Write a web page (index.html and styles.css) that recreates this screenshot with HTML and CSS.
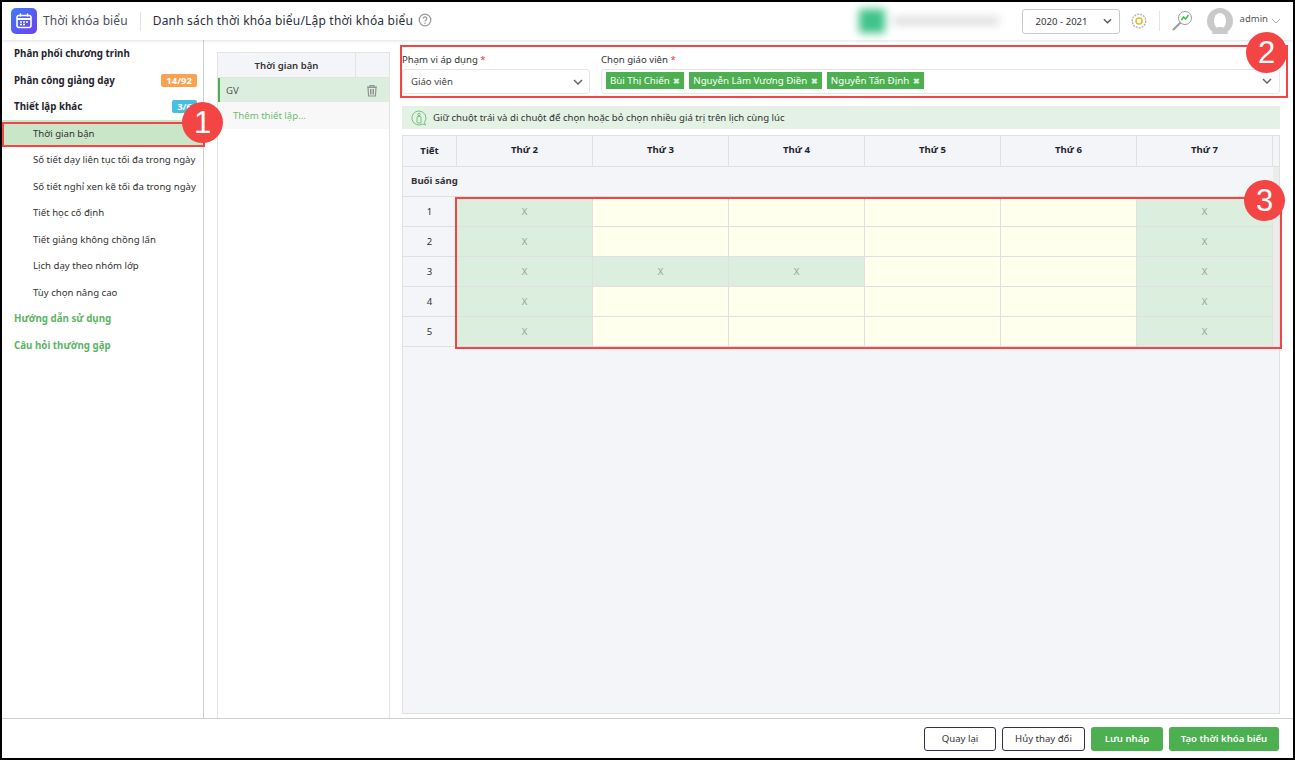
FILE: index.html
```html
<!DOCTYPE html>
<html lang="vi">
<head>
<meta charset="utf-8">
<title>Thời khóa biểu</title>
<link rel="stylesheet" href="styles.css">
</head>
<body>
<div class="frame">
  <header class="topbar">
    <div class="logo">
      <svg width="26" height="26" viewBox="0 0 26 26"><defs><linearGradient id="lg" x1="0" y1="0" x2="1" y2="1"><stop offset="0" stop-color="#3f7cf6"/><stop offset="1" stop-color="#6c3ff0"/></linearGradient></defs><rect width="26" height="26" rx="5" fill="url(#lg)"/><rect x="6" y="7.5" width="14" height="12" rx="2" fill="none" stroke="#fff" stroke-width="1.6"/><path d="M6 11h14" stroke="#fff" stroke-width="2"/><path d="M9.5 5.5v3M16.5 5.500v3" stroke="#fff" stroke-width="1.5"/><path d="M9 14h2M12 14h2M15 14h2M9 16.500h2M12 16.500h2" stroke="#fff" stroke-width="1.400"/></svg>
    </div>
    <div class="app-name">Thời khóa biểu</div>
    <div class="divider"></div>
    <div class="page-title">Danh sách thời khóa biểu/Lập thời khóa biểu</div>
    <svg class="help" width="14" height="14" viewBox="0 0 14 14"><circle cx="7" cy="7" r="5.800" fill="none" stroke="#9a9a9a" stroke-width="1.300"/><path d="M5.200 5.600a1.800 1.800 0 1 1 2.600 1.600c-.6.3-.8.6-.8 1.200" fill="none" stroke="#9a9a9a" stroke-width="1.200"/><circle cx="7" cy="10.200" r=".8" fill="#9a9a9a"/></svg>
    <div class="spacer"></div>
    <div class="blurred"><span class="blur-square"></span><span class="blur-text"></span></div>
    <div class="year"><span>2020 - 2021</span><svg width="9" height="6" viewBox="0 0 10 6"><path d="M1 1l4 4 4-4" fill="none" stroke="#555" stroke-width="1.500"/></svg></div>
    <svg class="gear" width="16" height="16" viewBox="0 0 16 16"><circle cx="8" cy="8" r="6.800" fill="none" stroke="#b5b5b5" stroke-width="1.400" stroke-dasharray="2 1"/><circle cx="8" cy="8" r="3" fill="none" stroke="#e3bd2e" stroke-width="1.600"/></svg>
    <div class="divider short"></div>
    <svg class="scope" width="22" height="22" viewBox="0 0 22 22"><circle cx="14" cy="8" r="6.500" fill="#fff" stroke="#9a9a9a"/><path d="M9.500 12.500L2 20" stroke="#9a9a9a" stroke-width="2"/><path d="M10.500 10l2-3 2 2 3-4" fill="none" stroke="#3fbf4f" stroke-width="1.500"/></svg>
    <svg class="avatar" width="26" height="26" viewBox="0 0 26 26"><circle cx="13" cy="13" r="13" fill="#c9c9c9"/><ellipse cx="13" cy="13" rx="6" ry="8" fill="#fff"/><path d="M5 26c1-5 4-7 8-7s7 2 8 7z" fill="#c9c9c9"/></svg>
    <div class="user">admin</div>
    <svg width="10" height="6" viewBox="0 0 10 6"><path d="M1 1l4 4 4-4" fill="none" stroke="#aaa"/></svg>
  </header>

  <div class="body">
    <nav class="sidebar">
      <div class="nav-item bold">Phân phối chương trình</div>
      <div class="nav-item bold"><span>Phân công giảng dạy</span><span class="badge orange">14/92</span></div>
      <div class="nav-item bold"><span>Thiết lập khác</span><span class="badge blue">3/6</span></div>
      <div class="nav-item sub active">Thời gian bận</div>
      <div class="nav-item sub">Số tiết dạy liên tục tối đa trong ngày</div>
      <div class="nav-item sub">Số tiết nghỉ xen kẽ tối đa trong ngày</div>
      <div class="nav-item sub">Tiết học cố định</div>
      <div class="nav-item sub">Tiết giảng không chồng lấn</div>
      <div class="nav-item sub">Lịch dạy theo nhóm lớp</div>
      <div class="nav-item sub">Tùy chọn nâng cao</div>
      <div class="nav-item bold green">Hướng dẫn sử dụng</div>
      <div class="nav-item bold green">Câu hỏi thường gặp</div>
    </nav>

    <section class="list-wrap">
      <div class="list">
        <div class="list-head"><div class="lh-main">Thời gian bận</div><div class="lh-side"></div></div>
        <div class="list-row"><span>GV</span>
          <svg width="12" height="13" viewBox="0 0 12 13"><path d="M1 3h10M4 3V1.500h4V3" fill="none" stroke="#8f948f" stroke-width="1.200"/><path d="M2 3.500h8l-.6 8.500H2.600z" fill="none" stroke="#8f948f" stroke-width="1.200"/><path d="M4.500 5v5.500M6 5v5.500M7.500 5v5.500" stroke="#8f948f"/></svg>
        </div>
        <div class="list-add">Thêm thiết lập...</div>
      </div>
    </section>

    <main class="main">
      <div class="filters">
        <div class="field scope-field">
          <label class="lbl">Phạm vi áp dụng <em>*</em></label>
          <div class="select"><span>Giáo viên</span><svg width="10" height="6" viewBox="0 0 10 6"><path d="M1 1l4 4 4-4" fill="none" stroke="#666" stroke-width="1.500"/></svg></div>
        </div>
        <div class="field teacher-field">
          <label class="lbl">Chọn giáo viên <em>*</em></label>
          <div class="select multi">
            <span class="tag">Bùi Thị Chiến <b>✖</b></span>
            <span class="tag">Nguyễn Lâm Vương Điền <b>✖</b></span>
            <span class="tag">Nguyễn Tấn Định <b>✖</b></span>
            <svg class="caret" width="10" height="6" viewBox="0 0 10 6"><path d="M1 1l4 4 4-4" fill="none" stroke="#666" stroke-width="1.500"/></svg>
          </div>
        </div>
      </div>
      <div class="hint">
        <svg width="16" height="16" viewBox="0 0 16 16"><path d="M8 1a7 7 0 1 0 3.500 13l3 .8-1-2.500A7 7 0 0 0 8 1z" fill="none" stroke="#76c27d"/><rect x="6" y="6.500" width="4" height="6.500" rx="1" fill="none" stroke="#76c27d"/><circle cx="8" cy="4.500" r="1.200" fill="none" stroke="#76c27d"/></svg>
        <span>Giữ chuột trái và di chuột để chọn hoặc bỏ chọn nhiều giá trị trên lịch cùng lúc</span>
      </div>
      <div class="timetable">
        <div class="grid">
          <div class="th first">Tiết</div><div class="th">Thứ 2</div><div class="th">Thứ 3</div><div class="th">Thứ 4</div><div class="th">Thứ 5</div><div class="th">Thứ 6</div><div class="th">Thứ 7</div><div class="th gut"></div>
          <div class="session">Buổi sáng</div><div class="gutter"></div>
          <div class="no">1</div><div class="c busy">X</div><div class="c"></div><div class="c"></div><div class="c"></div><div class="c"></div><div class="c busy">X</div><div class="gutter"></div>
          <div class="no">2</div><div class="c busy">X</div><div class="c"></div><div class="c"></div><div class="c"></div><div class="c"></div><div class="c busy">X</div><div class="gutter"></div>
          <div class="no">3</div><div class="c busy">X</div><div class="c busy">X</div><div class="c busy">X</div><div class="c"></div><div class="c"></div><div class="c busy">X</div><div class="gutter"></div>
          <div class="no">4</div><div class="c busy">X</div><div class="c"></div><div class="c"></div><div class="c"></div><div class="c"></div><div class="c busy">X</div><div class="gutter"></div>
          <div class="no">5</div><div class="c busy">X</div><div class="c"></div><div class="c"></div><div class="c"></div><div class="c"></div><div class="c busy">X</div><div class="gutter"></div>
        </div>
      </div>
    </main>
  </div>

  <footer class="footer">
    <button class="btn outline w72">Quay lại</button>
    <button class="btn outline w83">Hủy thay đổi</button>
    <button class="btn solid w72">Lưu nháp</button>
    <button class="btn solid w110">Tạo thời khóa biểu</button>
  </footer>

  <div class="mark m1"></div><div class="mark m2"></div><div class="mark m3"></div>
  <div class="num n1">1</div><div class="num n2">2</div><div class="num n3">3</div>
</div>
</body>
</html>
```

FILE: styles.css
```css
* { box-sizing: border-box; }
html, body { margin: 0; height: 100%; }
body { font-family: "Noto Sans", "Open Sans", sans-serif; font-size: 9.6px; color: #222; background: #fff; overflow: hidden; }
.frame { position: relative; width: 1295px; height: 760px; border: 2px solid #000; display: flex; flex-direction: column; }

.topbar { height: 38px; flex: none; display: flex; align-items: center; padding: 0 12px 0 9px; background: #fff; box-shadow: 0 1px 3px rgba(0,0,0,.12); position: relative; z-index: 1; }
.logo { width: 26px; height: 26px; flex: none; }
.app-name { font-size: 12px; color: #4a4f5a; margin-left: 6px; letter-spacing: .1px; padding-bottom: 2px; }
.divider { width: 1px; height: 19px; background: #e4e4e4; margin: 0 12px; }
.divider.short { height: 20px; margin: 0 11px 0 12px; }
.page-title { font-size: 12px; color: #2b2f3a; letter-spacing: .19px; padding-bottom: 2px; }
.help { margin-left: 5px; margin-bottom: 2px; }
.spacer { flex: 1; }
.blurred { display: flex; align-items: center; width: 152px; gap: 8px; margin-right: 11px; filter: blur(4px); }
.blur-square { width: 26px; height: 24px; background: #3fc48a; }
.blur-text { width: 106px; height: 8px; background: #dcdcdc; }
.year { width: 98px; height: 25px; border: 1px solid #c9c9c9; border-radius: 3px; display: flex; align-items: center; justify-content: space-between; padding: 0 7px 0 13px; font-size: 9.6px; color: #333; margin-right: 11px; }
.scope { margin-right: 14px; }
.avatar { flex: none; }
.user { font-size: 9.5px; color: #555; margin: 0 3px 6px 7px; }

.body { flex: 1; min-height: 0; display: flex; background: #fff; }
.sidebar { width: 202px; flex: none; background: #fff; border-right: 1px solid #cfcfcf; padding-top: .4px; }
.nav-item { height: 26.5px; display: flex; align-items: center; justify-content: space-between; padding: 0 0 0 12px; font-size: 9.6px; color: #333; }
.nav-item.bold { font-weight: 700; font-size: 9.75px; color: #1f2430; padding-right: 6px; }
.nav-item.green { color: #5cb565; }
.nav-item.sub { padding-left: 31px; }
.nav-item.active { background: #c9e6c9; }
.badge { height: 13px; line-height: 13px; padding: 0 5px; border-radius: 2px; color: #fff; font-size: 9.5px; }
.badge.orange { background: #f9a24f; }
.badge.blue { background: #45c0e3; }

.list-wrap { width: 186px; flex: none; padding: 12px 0 0 13px; background: #fff; }
.list { height: 100%; background: #fff; border: 1px solid #e3e3e3; border-bottom: 0; }
.list-head { display: flex; height: 25px; background: #f4f5f9; border-bottom: 1px solid #e3e3e3; }
.lh-main { flex: 1; text-align: center; line-height: 25px; font-weight: 600; color: #333; border-right: 1px solid #e3e3e3; }
.lh-side { width: 33px; }
.list-row { height: 24px; background: #dceedd; border-left: 2px solid #4caf50; display: flex; align-items: center; justify-content: space-between; padding: 0 11px 0 6px; color: #555; }
.list-add { height: 27px; line-height: 27px; padding-left: 15px; background: #f8f8f8; color: #6cbd74; }

.main { flex: 1; min-width: 0; background: #fff; padding: 3px 13px 4px 12px; display: flex; flex-direction: column; }
.filters { display: flex; gap: 11px; height: 63px; padding-top: 10px; flex: none; }
.field { display: flex; flex-direction: column; }
.scope-field { width: 188px; }
.teacher-field { flex: 1; }
.lbl { font-size: 9.6px; line-height: 13px; color: #333; margin-bottom: 3px; }
.lbl em { color: #e53935; font-style: normal; }
.select { height: 25px; border: 1px solid #e6e6e6; border-radius: 3px; display: flex; align-items: center; justify-content: space-between; padding: 0 6px 0 8px; color: #444; background: #fff; }
.select.multi { justify-content: flex-start; gap: 5px; padding: 0 7px 2px 4px; }
.tag { background: #4caf50; color: #fff; height: 17px; line-height: 17px; padding: 0 4px; font-size: 9.7px; white-space: nowrap; }
.tag b { font-size: 8px; color: #d8eed9; margin-left: 1px; }
.caret { margin-left: auto; }

.hint { height: 23px; flex: none; background: #e4f1e5; display: flex; align-items: center; gap: 6px; padding-left: 9px; color: #333; font-size: 9.6px; }
.timetable { flex: 1; margin-top: 6px; background: #f4f5f9; border: 1px solid #e0e0e0; overflow: hidden; }
.grid { display: grid; grid-template-columns: 54px repeat(6, 136px) 1fr; grid-template-rows: 31px; grid-auto-rows: 30px; }
.th { background: #f4f5f9; display: flex; align-items: center; justify-content: center; font-weight: 700; color: #1f2430; border-right: 1px solid #e0e0e0; border-bottom: 1px solid #e0e0e0; padding-bottom: 3px; }
.th.first { padding-bottom: 2px; }
.th.gut { border-right: 0; }
.session { grid-column: 1 / 8; display: flex; align-items: center; padding: 0 0 2px 8px; font-weight: 700; color: #333; border-bottom: 1px solid #e0e0e0; }
.gutter { background: #ececec; }
.no { display: flex; align-items: center; justify-content: center; color: #333; border-right: 1px solid #e0e0e0; border-bottom: 1px solid #e0e0e0; }
.c { background: #ffffee; border-right: 1px solid #e0e0e0; border-bottom: 1px solid #e0e0e0; display: flex; align-items: center; justify-content: center; color: #97a597; padding-bottom: 1px; }
.c.busy { background: #dceedd; }

.footer { height: 40px; flex: none; border-top: 1px solid #cfcfcf; background: #fff; display: flex; align-items: center; justify-content: flex-end; gap: 6px; padding-right: 14px; }
.btn { height: 24px; border-radius: 3px; font: inherit; font-size: 9.6px; cursor: pointer; }
.btn.outline { background: #fff; border: 1px solid #2f3050; color: #333; }
.btn.solid { background: #4caf50; border: 0; color: #fff; font-weight: 600; }
.w83 { width: 83px; } .w72 { width: 72px; } .w110 { width: 110px; }

.mark { position: absolute; border: 2px solid #f44545; z-index: 2; pointer-events: none; }
.m1 { left: 0; top: 120px; width: 203px; height: 25px; }
.m2 { left: 398px; top: 43px; width: 888px; height: 53px; }
.m3 { left: 453px; top: 195px; width: 827px; height: 152px; }
.num { position: absolute; width: 41px; height: 41px; border-radius: 50%; background: #f44545; color: #fff; font-family: "Liberation Sans", Arial, sans-serif; font-size: 31px; line-height: 41px; text-align: center; z-index: 3; }
.n1 { left: 180px; top: 100px; }
.n2 { left: 1244px; top: 30px; }
.n3 { left: 1242px; top: 178px; }
```
